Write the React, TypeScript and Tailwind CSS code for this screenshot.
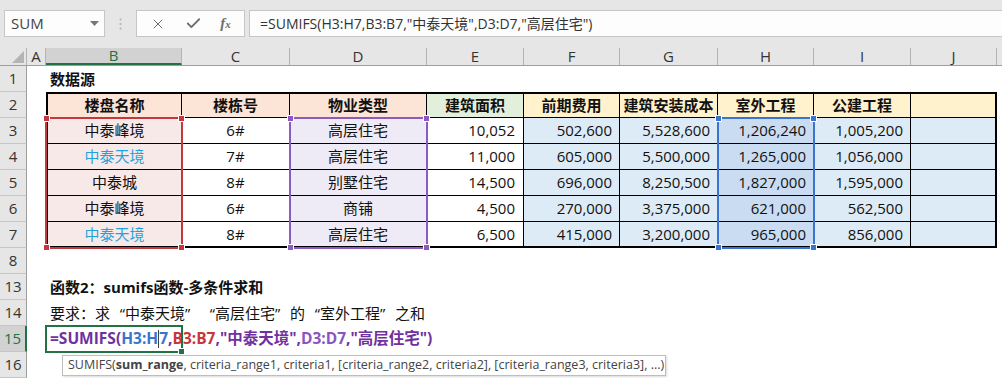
import { X, Check } from "lucide-react";

const ui = "font-['Open_Sans','Noto_Sans_CJK_SC',sans-serif]";

const letters = [
  { k: "A", w: "w-[19px]" },
  { k: "B", w: "w-[136px]" },
  { k: "C", w: "w-[108px]" },
  { k: "D", w: "w-[137px]" },
  { k: "E", w: "w-[97px]" },
  { k: "F", w: "w-[96px]" },
  { k: "G", w: "w-[98px]" },
  { k: "H", w: "w-[96px]" },
  { k: "I", w: "w-[97px]" },
  { k: "J", w: "w-[86px]" },
];

const tcols = [
  { w: "w-[136px]", hd: "bg-[#fce4d6]", bd: "bg-[#f8e9e9]", al: "justify-center" },
  { w: "w-[108px]", hd: "bg-[#fce4d6]", bd: "bg-white", al: "justify-center" },
  { w: "w-[137px]", hd: "bg-[#fce4d6]", bd: "bg-[#efebf6]", al: "justify-center" },
  { w: "w-[97px]", hd: "bg-[#e2efda]", bd: "bg-white", al: "justify-end pr-[8px]" },
  { w: "w-[96px]", hd: "bg-[#fff2cc]", bd: "bg-[#ddebf7]", al: "justify-end pr-[7px]" },
  { w: "w-[98px]", hd: "bg-[#fff2cc]", bd: "bg-[#ddebf7]", al: "justify-end pr-[7px]" },
  { w: "w-[96px]", hd: "bg-[#fff2cc]", bd: "bg-[#c9dcf1]", al: "justify-end pr-[7px]" },
  { w: "w-[97px]", hd: "bg-[#fff2cc]", bd: "bg-[#ddebf7]", al: "justify-end pr-[7px]" },
  { w: "w-[86px]", hd: "bg-[#fff2cc]", bd: "bg-[#ddebf7]", al: "justify-end pr-[7px]" },
];

const heads = ["楼盘名称", "楼栋号", "物业类型", "建筑面积", "前期费用", "建筑安装成本", "室外工程", "公建工程", ""];

const data = [
  ["中泰峰境", "6#", "高层住宅", "10,052", "502,600", "5,528,600", "1,206,240", "1,005,200", ""],
  ["中泰天境", "7#", "高层住宅", "11,000", "605,000", "5,500,000", "1,265,000", "1,056,000", ""],
  ["中泰城", "8#", "别墅住宅", "14,500", "696,000", "8,250,500", "1,827,000", "1,595,000", ""],
  ["中泰峰境", "6#", "商铺", "4,500", "270,000", "3,375,000", "621,000", "562,500", ""],
  ["中泰天境", "8#", "高层住宅", "6,500", "415,000", "3,200,000", "965,000", "856,000", ""],
];

function RowHead({ n, active }: { n: string; active?: boolean }) {
  return (
    <div
      className={
        active
          ? "w-[27px] shrink-0 h-full flex items-center justify-center bg-[#d2d2d2] text-[#217346] border-b border-[#c6c6c6] border-r-2 border-r-[#217346] text-[15px]"
          : "w-[27px] shrink-0 h-full flex items-center justify-center bg-[#e6e6e6] text-[#333] border-b border-[#c6c6c6] border-r border-r-[#9e9e9e] text-[15px]"
      }
    >
      {n}
    </div>
  );
}

function Corner({ c }: { c: string }) {
  return (
    <>
      <div className={`absolute -left-[4px] -top-[4px] w-[7px] h-[7px] border border-white ${c}`} />
      <div className={`absolute -right-[4px] -top-[4px] w-[7px] h-[7px] border border-white ${c}`} />
      <div className={`absolute -left-[4px] -bottom-[4px] w-[7px] h-[7px] border border-white ${c}`} />
      <div className={`absolute -right-[4px] -bottom-[4px] w-[7px] h-[7px] border border-white ${c}`} />
    </>
  );
}

// full-width CJK quotes
function Q({ t }: { t: string }) {
  return <span className={t === "“" ? "inline-block w-[15px] text-right" : "inline-block w-[15px] text-left"}>{t}</span>;
}

export default function App() {
  return (
    <div className={`w-[1002px] h-[378px] overflow-hidden bg-white ${ui}`}>
      {/* formula bar */}
      <div className="h-[48px] bg-[#e6e6e6] flex items-start pt-[10px] pl-[4px]">
        <div className="w-[101px] h-[27px] bg-[#fdfdfd] border border-[#c6c6c6] flex items-center justify-between pl-[6px] pr-[5px]">
          <span className="text-[15px] text-[#444]">SUM</span>
          <svg width="9" height="5" viewBox="0 0 9 5">
            <path d="M0 0h9L4.5 5z" fill="#777" />
          </svg>
        </div>
        <div className="w-[31px] h-[27px] flex items-center justify-center">
          <svg width="3" height="12" viewBox="0 0 3 12">
            <circle cx="1.5" cy="1.5" r="1" fill="#b0b0b0" />
            <circle cx="1.5" cy="6" r="1" fill="#b0b0b0" />
            <circle cx="1.5" cy="10.5" r="1" fill="#b0b0b0" />
          </svg>
        </div>
        <div className="w-[109px] h-[27px] bg-[#fdfdfd] border border-[#c6c6c6] flex items-center justify-around px-[4px] text-[#6e6e6e]">
          <X size={16} strokeWidth={1.5} />
          <Check size={17} strokeWidth={2.6} />
          <span className="font-['Liberation_Serif',serif] italic text-[15px] font-semibold leading-none">
            f<span className="text-[11px]">x</span>
          </span>
        </div>
        <div className="ml-[4px] flex-1 h-[27px] bg-[#fdfdfd] border border-r-0 border-[#c6c6c6] flex items-center pl-[10px] text-[14px] text-[#333] whitespace-nowrap">
          =SUMIFS(H3:H7,B3:B7,"中泰天境",D3:D7,"高层住宅")
        </div>
      </div>

      {/* column headers */}
      <div className="h-[18px] flex bg-[#e6e6e6] border-b border-[#9e9e9e] text-[15px] text-[#333]">
        <div className="w-[27px] shrink-0 relative border-r border-[#b4b4b4]">
          <svg className="absolute right-[2px] bottom-[2px]" width="12" height="12" viewBox="0 0 12 12">
            <path d="M12 0v12H0z" fill="#b4b4b4" />
          </svg>
        </div>
        {letters.map((l) =>
          l.k === "B" ? (
            <div
              key={l.k}
              className={`${l.w} shrink-0 flex items-center justify-center bg-[#d2d2d2] text-[#217346] border-r border-[#b4b4b4] border-b-2 border-b-[#217346] leading-none`}
            >
              {l.k}
            </div>
          ) : (
            <div key={l.k} className={`${l.w} shrink-0 flex items-center justify-center border-r border-[#b4b4b4] leading-none`}>
              {l.k}
            </div>
          )
        )}
      </div>

      {/* grid body */}
      <div className="relative text-[15px] text-[#111]">
        <div className="h-[26px] flex">
          <RowHead n="1" />
          <div className="w-[19px]" />
          <div className="pl-[4px] flex items-center font-bold whitespace-nowrap">数据源</div>
        </div>

        <div className="h-[26px] flex">
          <RowHead n="2" />
          <div className="w-[19px] shrink-0" />
          {tcols.map((c, i) => (
            <div
              key={i}
              className={`${c.w} ${c.hd} shrink-0 flex items-center justify-center font-bold border-t-2 border-b border-r border-black ${i === 0 ? "border-l-2" : ""} ${i === tcols.length - 1 ? "border-r-2" : ""}`}
            >
              {heads[i]}
            </div>
          ))}
        </div>

        {data.map((r, ri) => (
          <div key={ri} className="h-[26px] flex">
            <RowHead n={String(ri + 3)} />
            <div className="w-[19px] shrink-0" />
            {tcols.map((c, i) => (
              <div
                key={i}
                className={`${c.w} ${c.bd} ${c.al} shrink-0 flex items-center border-r border-black ${ri === data.length - 1 ? "border-b-2" : "border-b"} ${i === 0 ? "border-l-2" : ""} ${i === tcols.length - 1 ? "border-r-2" : ""} ${i === 0 && (ri === 1 || ri === 4) ? "text-[#1fa3dd]" : ""}`}
              >
                {r[i]}
              </div>
            ))}
          </div>
        ))}

        <div className="h-[26px] flex">
          <RowHead n="8" />
        </div>

        <div className="h-[26px] flex">
          <RowHead n="13" />
          <div className="w-[19px] shrink-0" />
          <div className="pl-[4px] flex items-center font-bold whitespace-nowrap">函数2：sumifs函数-多条件求和</div>
        </div>

        <div className="h-[26px] flex">
          <RowHead n="14" />
          <div className="w-[19px] shrink-0" />
          <div className="pl-[4px] flex items-center whitespace-pre">
            要求：求<Q t="“" />中泰天境<Q t="”" /> <Q t="“" />高层住宅<Q t="”" />的<Q t="“" />室外工程<Q t="”" />之和
          </div>
        </div>

        <div className="h-[26px] flex">
          <RowHead n="15" active />
          <div className="w-[19px] shrink-0" />
          <div className="pl-[4px] flex items-center font-bold whitespace-nowrap text-[15.5px] text-[#7030a0]">
            =SUMIFS(
            <span className="text-[#3a74cf]">H3:H</span>
            <span className="inline-block w-px h-[18px] bg-[#444]" />
            <span className="text-[#3a74cf]">7</span>,
            <span className="text-[#c8363d]">B3:B7</span>,"中泰天境",
            <span className="text-[#8a55c0]">D3:D7</span>,"高层住宅")
          </div>
        </div>

        <div className="h-[26px] flex">
          <RowHead n="16" />
        </div>

        {/* reference highlights */}
        <div className="absolute left-[45px] top-[51px] w-[138px] h-[132px] border-2 border-[#c5373f]">
          <Corner c="bg-[#c5373f]" />
        </div>
        <div className="absolute left-[289px] top-[51px] w-[139px] h-[132px] border-2 border-[#8c5bc1]">
          <Corner c="bg-[#8c5bc1]" />
        </div>
        <div className="absolute left-[717px] top-[51px] w-[98px] h-[132px] border-2 border-[#3a74cf]">
          <Corner c="bg-[#3a74cf]" />
        </div>

        {/* active cell */}
        <div className="absolute left-[45px] top-[259px] w-[138px] h-[28px] border-2 border-[#217346]">
          <div className="absolute -right-[4px] -bottom-[4px] w-[7px] h-[7px] bg-[#217346] border border-white" />
        </div>

        {/* function tooltip */}
        <div className="absolute left-[62px] top-[289px] w-[604px] h-[21px] bg-white border border-[#bebebe] shadow-[1px_1px_2px_rgba(0,0,0,0.15)] flex items-center pl-[5px] text-[12.5px] text-[#444] whitespace-nowrap">
          SUMIFS(<span className="font-bold">sum_range</span>, criteria_range1, criteria1, [criteria_range2, criteria2], [criteria_range3, criteria3], ...)
        </div>
      </div>
    </div>
  );
}
